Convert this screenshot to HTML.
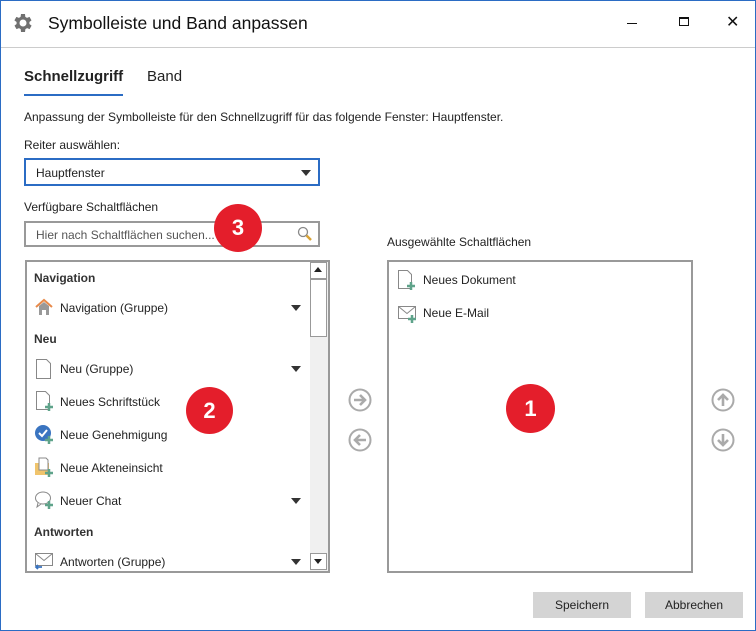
<!DOCTYPE html>
<html><head><meta charset="utf-8"><style>
*{margin:0;padding:0;box-sizing:border-box}
body{width:756px;height:631px;overflow:hidden;background:#fff;font-family:"Liberation Sans",sans-serif;font-size:12px;color:#222;position:relative}
.frame{position:absolute;left:0;top:0;width:756px;height:631px;border:1px solid #2b6cc4}
.a{position:absolute;white-space:nowrap}
.box{position:absolute;border:2px solid #999;background:#fff}
.tri{position:absolute;width:0;height:0;border-left:5px solid transparent;border-right:5px solid transparent;border-top:6px solid #333}
.badge{position:absolute;border-radius:50%;background:#e41e2b;color:#fff;font-weight:bold;font-size:22px;text-align:center}
.btn{position:absolute;background:#d4d4d4;text-align:center;line-height:26px;font-size:12px}
.circ{position:absolute;width:24px;height:24px}
</style></head><body>
<div class="frame"></div>
<svg class="a" style="left:11px;top:11px" width="24" height="24" viewBox="0 0 24 24"><path fill="#707070" d="M19.4 13a7.5 7.5 0 000-2l2.1-1.6-2-3.5-2.5 1a7.6 7.6 0 00-1.7-1L15 3h-4l-.4 2.9a7.6 7.6 0 00-1.7 1l-2.5-1-2 3.5L6.6 11a7.5 7.5 0 000 2l-2.1 1.6 2 3.5 2.5-1a7.6 7.6 0 001.7 1L11 21h4l.4-2.9a7.6 7.6 0 001.7-1l2.5 1 2-3.5zM13 15.5a3.5 3.5 0 110-7 3.5 3.5 0 010 7z" transform="translate(-1 0)"/></svg>
<div class="a" style="left:48px;top:13px;font-size:17.5px;color:#111">Symbolleiste und Band anpassen</div>
<div class="a" style="left:627px;top:23px;width:10px;height:1px;background:#111"></div>
<div class="a" style="left:679px;top:17px;width:10px;height:9px;border:1px solid #111;border-top-width:2px"></div>
<div class="a" style="left:726px;top:12px;font-size:16px;color:#111">✕</div>
<div class="a" style="left:1px;top:47px;width:754px;height:1px;background:#ccc"></div>
<div class="a" style="left:24px;top:68px;font-size:15px;font-weight:bold;color:#222">Schnellzugriff</div>
<div class="a" style="left:24px;top:94px;width:99px;height:2px;background:#2b6cc4"></div>
<div class="a" style="left:147px;top:68px;font-size:15px;color:#222">Band</div>
<div class="a" style="left:24px;top:110px">Anpassung der Symbolleiste für den Schnellzugriff für das folgende Fenster: Hauptfenster.</div>
<div class="a" style="left:24px;top:138px">Reiter auswählen:</div>
<div class="a" style="left:24px;top:158px;width:296px;height:28px;border:2px solid #2b6cc4"></div>
<div class="a" style="left:36px;top:166px">Hauptfenster</div>
<div class="tri" style="left:301px;top:170px"></div>
<div class="a" style="left:24px;top:200px">Verfügbare Schaltflächen</div>
<div class="a" style="left:24px;top:221px;width:296px;height:26px;border:2px solid #999"></div>
<div class="a" style="left:36px;top:228px;color:#555">Hier nach Schaltflächen suchen...</div>
<svg class="a" style="left:297px;top:226px" width="16" height="16"><circle cx="6" cy="6" r="4.5" fill="none" stroke="#888" stroke-width="1.3"/><path d="M9.5 9.5l4.5 4.5" stroke="#d9a336" stroke-width="2.5"/></svg>
<div class="a" style="left:387px;top:235px">Ausgewählte Schaltflächen</div>

<div class="box" style="left:25px;top:260px;width:305px;height:313px"></div>
<div class="a" style="left:310px;top:262px;width:18px;height:309px;background:#f0f0f0"></div>
<div class="a" style="left:310px;top:262px;width:17px;height:17px;border:1px solid #999;background:#fff"></div>
<div class="a" style="left:314px;top:267px;border-left:4px solid transparent;border-right:4px solid transparent;border-bottom:5px solid #222"></div>
<div class="a" style="left:310px;top:279px;width:17px;height:58px;border:1px solid #999;background:#fff"></div>
<div class="a" style="left:310px;top:553px;width:17px;height:17px;border:1px solid #999;background:#fff"></div>
<div class="a" style="left:314px;top:559px;border-left:4px solid transparent;border-right:4px solid transparent;border-top:5px solid #222"></div>

<div class="a" style="left:34px;top:271px;font-weight:bold;color:#333">Navigation</div>
<svg class="a" style="left:34px;top:297px" width="20" height="20"><path d="M2 10L10 3l8 7" fill="none" stroke="#e88a4a" stroke-width="2"/><path d="M5 9v9h10V9L10 5z" fill="#999"/><rect x="8" y="13" width="4" height="5" fill="#fff"/></svg>
<div class="a" style="left:60px;top:301px">Navigation (Gruppe)</div>
<div class="tri" style="left:291px;top:305px"></div>
<div class="a" style="left:34px;top:332px;font-weight:bold;color:#333">Neu</div>
<svg class="a" style="left:35px;top:358px" width="18" height="22"><path d="M1.5 1.5h10l4 4v15h-14z" fill="#fff" stroke="#888"/></svg>
<div class="a" style="left:60px;top:362px">Neu (Gruppe)</div>
<div class="tri" style="left:291px;top:366px"></div>
<svg class="a" style="left:35px;top:390px" width="20" height="22"><path d="M1.5 1.5h9l4 4v14h-13z" fill="#fff" stroke="#888"/><path d="M14 13v8M10 17h8" stroke="#5fa38a" stroke-width="2.5"/></svg>
<div class="a" style="left:60px;top:395px">Neues Schriftstück</div>
<svg class="a" style="left:34px;top:424px" width="21" height="21"><circle cx="9" cy="9" r="8" fill="#3a74c0"/><path d="M5 9l3 3 5-6" fill="none" stroke="#fff" stroke-width="2"/><path d="M15 12v8M11 16h8" stroke="#5fa38a" stroke-width="2.5"/></svg>
<div class="a" style="left:60px;top:428px">Neue Genehmigung</div>
<svg class="a" style="left:34px;top:457px" width="21" height="21"><rect x="1" y="6" width="14" height="12" fill="#f0c46c"/><path d="M5 1h7l2 2v10H5z" fill="#fff" stroke="#888"/><path d="M15 12v8M11 16h8" stroke="#5fa38a" stroke-width="2.5"/></svg>
<div class="a" style="left:60px;top:461px">Neue Akteneinsicht</div>
<svg class="a" style="left:34px;top:490px" width="21" height="21"><ellipse cx="9" cy="8" rx="7.5" ry="6" fill="#fff" stroke="#888"/><path d="M4 13l-1 4 4-3" fill="#fff" stroke="#888"/><path d="M15 11v8M11 15h8" stroke="#5fa38a" stroke-width="2.5"/></svg>
<div class="a" style="left:60px;top:494px">Neuer Chat</div>
<div class="tri" style="left:291px;top:498px"></div>
<div class="a" style="left:34px;top:525px;font-weight:bold;color:#333">Antworten</div>
<svg class="a" style="left:34px;top:551px" width="21" height="20"><rect x="1.5" y="2.5" width="17" height="12" fill="#fff" stroke="#888"/><path d="M1.5 2.5l8.5 7 8.5-7" fill="none" stroke="#888"/><path d="M8 16H2m2-2l-2 2 2 2" fill="none" stroke="#3a74c0" stroke-width="1.8"/></svg>
<div class="a" style="left:60px;top:555px">Antworten (Gruppe)</div>
<div class="tri" style="left:291px;top:559px"></div>

<div class="box" style="left:387px;top:260px;width:306px;height:313px"></div>
<svg class="a" style="left:397px;top:269px" width="20" height="22"><path d="M1.5 1.5h9l4 4v14h-13z" fill="#fff" stroke="#888"/><path d="M14 13v8M10 17h8" stroke="#5fa38a" stroke-width="2.5"/></svg>
<div class="a" style="left:423px;top:273px">Neues Dokument</div>
<svg class="a" style="left:397px;top:304px" width="21" height="20"><rect x="1.5" y="2.5" width="17" height="12" fill="#fff" stroke="#888"/><path d="M1.5 2.5l8.5 7 8.5-7" fill="none" stroke="#888"/><path d="M15 11v8M11 15h8" stroke="#5fa38a" stroke-width="2.5"/></svg>
<div class="a" style="left:423px;top:306px">Neue E-Mail</div>

<svg class="circ" style="left:348px;top:388px" viewBox="0 0 24 24"><circle cx="12" cy="12" r="10.5" fill="none" stroke="#aaa" stroke-width="2"/><path d="M6 12h11M12 7l5 5-5 5" fill="none" stroke="#aaa" stroke-width="2.6"/></svg>
<svg class="circ" style="left:348px;top:428px" viewBox="0 0 24 24"><circle cx="12" cy="12" r="10.5" fill="none" stroke="#aaa" stroke-width="2"/><path d="M18 12H7M12 7l-5 5 5 5" fill="none" stroke="#aaa" stroke-width="2.6"/></svg>
<svg class="circ" style="left:711px;top:388px" viewBox="0 0 24 24"><circle cx="12" cy="12" r="10.5" fill="none" stroke="#aaa" stroke-width="2"/><path d="M12 18V7M7 12l5-5 5 5" fill="none" stroke="#aaa" stroke-width="2.6"/></svg>
<svg class="circ" style="left:711px;top:428px" viewBox="0 0 24 24"><circle cx="12" cy="12" r="10.5" fill="none" stroke="#aaa" stroke-width="2"/><path d="M12 6v11M7 12l5 5 5-5" fill="none" stroke="#aaa" stroke-width="2.6"/></svg>

<div class="btn" style="left:533px;top:592px;width:98px">Speichern</div>
<div class="btn" style="left:645px;top:592px;width:98px">Abbrechen</div>

<div class="badge" style="left:214px;top:204px;width:48px;height:48px;line-height:48px">3</div>
<div class="badge" style="left:186px;top:387px;width:47px;height:47px;line-height:47px">2</div>
<div class="badge" style="left:506px;top:384px;width:49px;height:49px;line-height:49px">1</div>
</body></html>
